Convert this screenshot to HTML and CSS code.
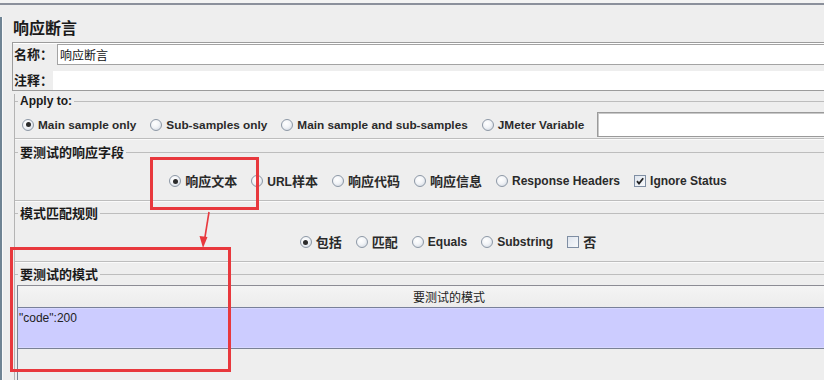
FILE: index.html
```html
<!DOCTYPE html>
<html lang="zh-CN">
<head>
<meta charset="utf-8">
<title>响应断言</title>
<link rel="stylesheet" href="styles.css">
</head>
<body>
<div class="window">
  <div class="topbar"></div>
  <div class="content">
    <h1 class="title">响应断言</h1>
    <div class="namebox">
      <div class="nrow">
        <span class="nlabel">名称：</span>
        <div class="ninput">响应断言</div>
      </div>
      <div class="nrow crow">
        <span class="nlabel">注释：</span>
        <div class="ninput cinput"></div>
      </div>
    </div>

    <div class="panel">
      <fieldset class="group">
        <legend class="legend latin">Apply to:</legend>
        <div class="row apply">
          <span class="opt"><span class="radio on"></span><span class="lbl">Main sample only</span></span>
          <span class="opt"><span class="radio"></span><span class="lbl">Sub-samples only</span></span>
          <span class="opt"><span class="radio"></span><span class="lbl">Main sample and sub-samples</span></span>
          <span class="opt"><span class="radio"></span><span class="lbl">JMeter Variable</span></span>
          <div class="varfield"></div>
        </div>
      </fieldset>

      <fieldset class="group">
        <legend class="legend">要测试的响应字段</legend>
        <div class="row centered">
          <span class="opt"><span class="radio on"></span><span class="lbl"><span class="cjk">响应文本</span></span></span>
          <span class="opt"><span class="radio"></span><span class="lbl">URL<span class="cjk">样本</span></span></span>
          <span class="opt"><span class="radio"></span><span class="lbl"><span class="cjk">响应代码</span></span></span>
          <span class="opt"><span class="radio"></span><span class="lbl"><span class="cjk">响应信息</span></span></span>
          <span class="opt"><span class="radio"></span><span class="lbl">Response Headers</span></span>
          <span class="opt last"><span class="check on"><svg viewBox="0 0 12 12" width="12" height="12"><path d="M3 6.2 L5 8.6 L9.2 3.2" fill="none" stroke="#222" stroke-width="1.8"/></svg></span><span class="lbl">Ignore Status</span></span>
        </div>
      </fieldset>

      <fieldset class="group">
        <legend class="legend">模式匹配规则</legend>
        <div class="row centered">
          <span class="opt"><span class="radio on"></span><span class="lbl"><span class="cjk">包括</span></span></span>
          <span class="opt"><span class="radio"></span><span class="lbl"><span class="cjk">匹配</span></span></span>
          <span class="opt"><span class="radio"></span><span class="lbl">Equals</span></span>
          <span class="opt"><span class="radio"></span><span class="lbl">Substring</span></span>
          <span class="opt last"><span class="check"></span><span class="lbl"><span class="cjk">否</span></span></span>
        </div>
      </fieldset>

      <fieldset class="group last">
        <legend class="legend">要测试的模式</legend>
        <div class="table">
          <div class="thead">要测试的模式</div>
          <div class="trow selected">"code":200</div>
          <div class="tempty"></div>
        </div>
      </fieldset>
    </div>
  </div>

  <div class="mark mark1"></div>
  <div class="mark mark2"></div>
  <svg class="arrow" width="30" height="50" viewBox="0 0 30 50">
    <line x1="19" y1="2" x2="14.5" y2="30" stroke="#e8383d" stroke-width="1.6"/>
    <polygon points="9.5,26 17.5,27 13,38" fill="#e8383d"/>
  </svg>
</div>
</body>
</html>
```
FILE: styles.css
```css
html, body {
  margin: 0;
  padding: 0;
  background: #eeeeee;
  overflow: hidden;
}
body {
  width: 824px;
  height: 380px;
  font-family: "Liberation Sans", "Noto Sans CJK SC", sans-serif;
  color: #222;
}
.window {
  position: relative;
  width: 824px;
  height: 380px;
  overflow: hidden;
  background: #eeeeee;
}
.topbar {
  height: 3px;
  background: #f3f3f3;
  border-bottom: 2px solid #8b909b;
}
.content {
  border-left: 2px solid #6f8494;
  box-shadow: inset 1px 0 0 #fafafa;
  height: 375px;
  padding-left: 1px;
}
.title {
  margin: 12px 0 0 10px;
  font-family: "Noto Sans CJK SC", sans-serif;
  font-size: 16px;
  line-height: 20px;
  font-weight: 700;
  color: #1a1a1a;
}
.namebox {
  margin: 5px 0 0 9px;
  width: 900px;
  border: 1px solid #9c9c9c;
  border-right: none;
  box-shadow: inset 0 1px 0 #fff;
  height: 47px;
}
.nrow {
  display: flex;
  align-items: stretch;
  height: 22px;
}
.nlabel {
  font-family: "Noto Sans CJK SC", sans-serif;
  font-weight: 700;
  font-size: 13px;
  line-height: 22px;
  padding-left: 1px;
  width: 43px;
  color: #1a1a1a;
}
.ninput {
  margin-top: 1px;
  flex: 1;
  background: #fff;
  border: 1px solid #a3a3a3;
  border-right: none;
  font-family: "Noto Sans CJK SC", sans-serif;
  font-size: 12px;
  line-height: 19px;
  padding-left: 2px;
  color: #111;
}
.crow {
  height: 25px;
}
.crow .nlabel {
  line-height: 30px;
  width: 39px;
}
.cinput {
  margin-top: 6px;
  border: none;
}
.panel {
  margin: 3px 0 0 11px;
  width: 867px;
  border-left: 1px solid #b4b4b4;
}
.group {
  margin: 0;
  padding: 0;
  border: 1px solid #bdbdbd;
  border-left: none;
  min-inline-size: 0;
  box-shadow: 0 1px 0 #fafafa;
}
.group + .group {
  margin-top: 5px;
}
.group:nth-child(2) {
  margin-top: 6px;
}
.legend {
  margin-left: 3px;
  padding: 0 2px;
  font-family: "Noto Sans CJK SC", sans-serif;
  font-weight: 700;
  font-size: 13px;
  line-height: 14px;
  height: 14px;
  color: #1a1a1a;
}
.legend.latin {
  font-family: "Liberation Sans", sans-serif;
  font-size: 12px;
}
.row {
  display: flex;
  align-items: center;
  padding: 12px 0 9px;
  white-space: nowrap;
}
.row.apply {
  padding: 4px 0 1px 7px;
  height: 25px;
}
.row.apply .lbl {
  font-size: 11.8px;
}
.row.centered {
  justify-content: center;
  height: 20px;
}
.opt {
  display: inline-flex;
  align-items: center;
  flex: none;
  white-space: nowrap;
  margin-right: 14px;
}
.opt.last {
  margin-right: 0;
}
.lbl {
  margin-left: 4px;
  font-family: "Liberation Sans", "Noto Sans CJK SC", sans-serif;
  font-weight: 700;
  font-size: 12px;
  line-height: 16px;
  color: #2a2a2a;
}
.cjk {
  font-family: "Noto Sans CJK SC", sans-serif;
  font-size: 13px;
}
.radio {
  position: relative;
  width: 12px;
  height: 12px;
  box-sizing: border-box;
  border-radius: 50%;
  border: 1px solid #8d98a6;
  background: radial-gradient(circle at 40% 35%, #ffffff 0%, #f2f4f7 45%, #c9d1dc 100%);
  flex: none;
}
.radio.on::after {
  content: "";
  position: absolute;
  left: 2.5px;
  top: 2.5px;
  width: 5px;
  height: 5px;
  border-radius: 50%;
  background: #2b2b2b;
}
.check {
  width: 12px;
  height: 12px;
  box-sizing: border-box;
  border: 1px solid #7f8ea3;
  background: linear-gradient(135deg, #dfe5ee 0%, #f7f9fb 100%);
  flex: none;
  display: block;
}
.check svg {
  display: block;
  margin: -1px 0 0 -1px;
}
.varfield {
  flex: none;
  margin-left: -1px;
  width: 300px;
  height: 25px;
  box-sizing: border-box;
  background: #fff;
  border: 1px solid #9a9a9a;
  border-right: none;
  box-shadow: inset 1px 1px 0 #c8c8c8;
}
.table {
  margin: 4px 0 0 2px;
  width: 862px;
  border-top: 1px solid #8c8c94;
  border-left: 1px solid #7b8393;
}
.thead {
  height: 21px;
  line-height: 22px;
  text-align: center;
  font-family: "Noto Sans CJK SC", sans-serif;
  font-size: 12px;
  color: #222;
  background: linear-gradient(#f4f4f4, #ececec);
  border-bottom: 1px solid #79809a;
}
.trow {
  height: 41px;
  box-sizing: border-box;
  padding: 3px 0 0 1px;
  font-size: 12px;
  line-height: 14px;
  color: #222;
  border-bottom: 1px solid #7a8196;
}
.trow.selected {
  background: #ccccff;
  box-shadow: inset 0 1px 0 #d7d7ff, inset 0 -1px 0 #d7d7ff;
}
.tempty {
  height: 40px;
}
.mark {
  position: absolute;
  border: 3px solid #e8383d;
  box-sizing: border-box;
}
.mark1 {
  left: 150px;
  top: 157px;
  width: 109px;
  height: 53px;
}
.mark2 {
  left: 10px;
  top: 247px;
  width: 221px;
  height: 125px;
}
.arrow {
  position: absolute;
  left: 190px;
  top: 210px;
}
```
